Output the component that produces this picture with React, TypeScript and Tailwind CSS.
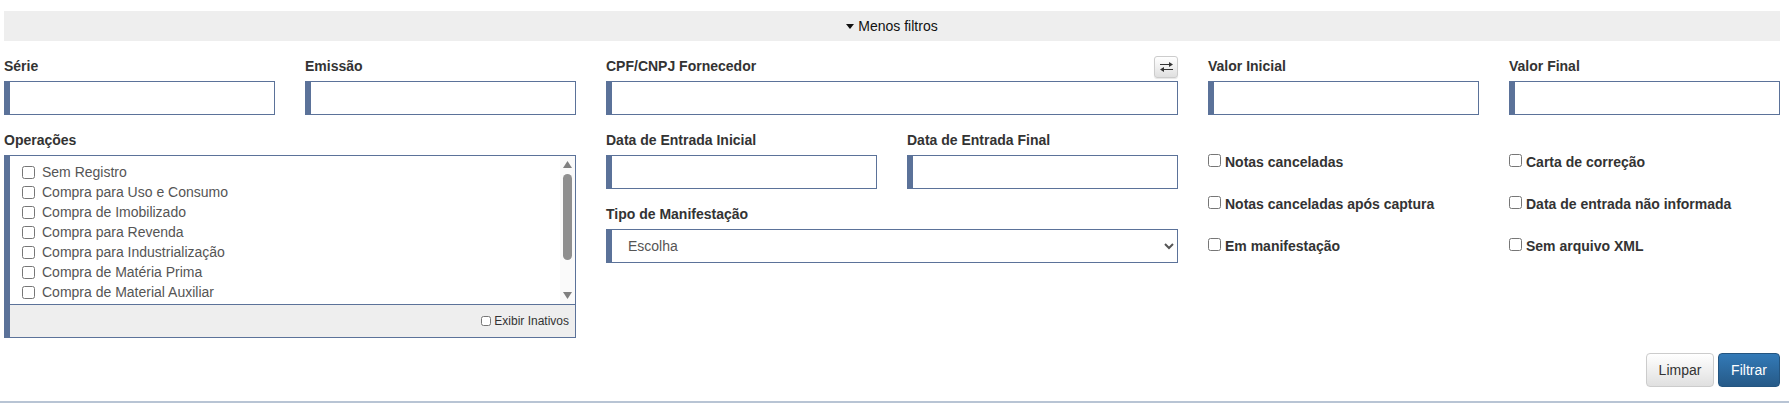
const operacoes = [
  "Sem Registro",
  "Compra para Uso e Consumo",
  "Compra de Imobilizado",
  "Compra para Revenda",
  "Compra para Industrialização",
  "Compra de Matéria Prima",
  "Compra de Material Auxiliar",
]

const opcoes = [
  "Notas canceladas",
  "Carta de correção",
  "Notas canceladas após captura",
  "Data de entrada não informada",
  "Em manifestação",
  "Sem arquivo XML",
]

function Field({ label, action }: { label: string; action?: React.ReactNode }) {
  return (
    <div>
      <div className="flex h-[25px] justify-between">
        <label className="text-sm leading-5 font-bold text-[#333]">{label}</label>
        {action}
      </div>
      <input
        type="text"
        className="block h-[34px] w-full border border-l-[6px] border-[#5b7299] bg-white px-3 text-sm outline-none"
      />
    </div>
  )
}

function SwapButton() {
  return (
    <button className="flex h-[22px] w-[24px] items-center justify-center rounded-[3px] border border-[#ccc] bg-gradient-to-b from-white to-[#e0e0e0] shadow-[0_1px_1px_rgba(0,0,0,0.1)]">
      <svg width="13" height="10" viewBox="0 0 13 10" fill="#333">
        <path d="M0 1.9h9V0l4 2.5L9 5V3.1H0z" />
        <path d="M13 6.9H4V5L0 7.5 4 10V8.1h9z" />
      </svg>
    </button>
  )
}

function Scrollbar() {
  return (
    <div className="flex w-[15px] flex-col items-center bg-[#fafafa] pt-[5px] pb-[5px]">
      <svg width="9" height="7" viewBox="0 0 9 7" fill="#808080">
        <path d="M4.5 0L9 7H0z" />
      </svg>
      <div className="mt-[6px] h-[86px] w-[9px] rounded-full bg-[#8f8f8f]" />
      <div className="flex-1" />
      <svg width="9" height="7" viewBox="0 0 9 7" fill="#808080">
        <path d="M0 0h9L4.5 7z" />
      </svg>
    </div>
  )
}

export default function App() {
  return (
    <div className="border-b-2 border-[#b8c4d4] bg-white pt-[11px] pb-[14px] font-['Liberation_Sans',Arial,sans-serif]">
      <div className="ml-[4px] w-[1776px]">
        <div className="flex h-[30px] items-center justify-center gap-[4px] bg-[#eee] text-sm text-[#111]">
          <svg width="8" height="5" viewBox="0 0 8 5" fill="#111">
            <path d="M0 0h8L4 5z" />
          </svg>
          Menos filtros
        </div>

        <div className="mt-[15px] grid grid-cols-3 gap-x-[30px]">
          <div>
            <div className="grid grid-cols-2 gap-x-[30px]">
              <Field label="Série" />
              <Field label="Emissão" />
            </div>
            <div className="mt-[15px]">
              <div className="h-[25px] text-sm leading-5 font-bold text-[#333]">Operações</div>
              <div className="h-[183px] border border-l-[6px] border-[#5b7299]">
                <div className="flex h-[148px]">
                  <div className="flex-1 pt-[6px] pl-[12px]">
                    {operacoes.map((op) => (
                      <label key={op} className="flex h-5 items-center gap-[7px] text-sm text-[#555]">
                        <input type="checkbox" />
                        {op}
                      </label>
                    ))}
                  </div>
                  <Scrollbar />
                </div>
                <div className="flex h-[33px] items-center justify-end gap-[3px] border-t border-[#5b7299] bg-[#eee] pr-[6px] text-xs text-[#333]">
                  <input type="checkbox" className="size-[10px]" />
                  Exibir Inativos
                </div>
              </div>
            </div>
          </div>

          <div>
            <Field label="CPF/CNPJ Fornecedor" action={<SwapButton />} />
            <div className="mt-[15px] grid grid-cols-2 gap-x-[30px]">
              <Field label="Data de Entrada Inicial" />
              <Field label="Data de Entrada Final" />
            </div>
            <div className="mt-[15px]">
              <div className="h-[25px] text-sm leading-5 font-bold text-[#333]">Tipo de Manifestação</div>
              <select className="block h-[34px] w-full border border-l-[6px] border-[#5b7299] bg-white pl-[12px] text-sm text-[#555] outline-none">
                <option>Escolha</option>
              </select>
            </div>
          </div>

          <div>
            <div className="grid grid-cols-2 gap-x-[30px]">
              <Field label="Valor Inicial" />
              <Field label="Valor Final" />
            </div>
            <div className="mt-[26px] grid auto-rows-[42px] grid-cols-2 gap-x-[30px]">
              {opcoes.map((op) => (
                <label key={op} className="flex items-center gap-[4px] text-sm font-bold text-[#333]">
                  <input type="checkbox" className="mb-[4px]" />
                  {op}
                </label>
              ))}
            </div>
          </div>
        </div>

        <div className="mt-[15px] flex justify-end gap-[4px]">
          <button className="h-[34px] w-[68px] rounded border border-[#ccc] bg-gradient-to-b from-white to-[#e0e0e0] text-sm text-[#333]">
            Limpar
          </button>
          <button className="h-[34px] w-[62px] rounded border border-[#245580] bg-gradient-to-b from-[#337ab7] to-[#265a88] text-sm text-white">
            Filtrar
          </button>
        </div>
      </div>
    </div>
  )
}
